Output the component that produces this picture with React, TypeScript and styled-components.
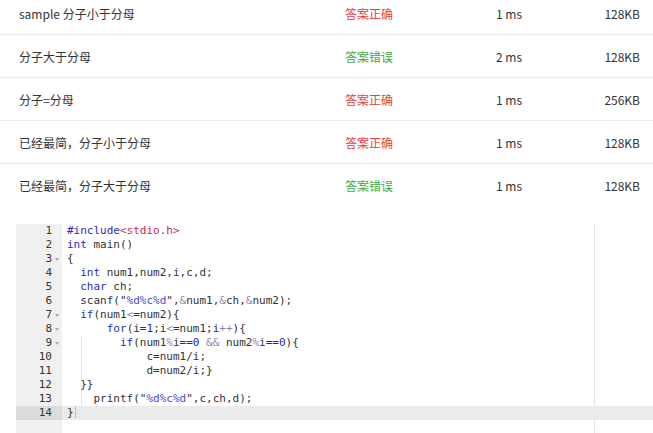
import { FC } from "react";
import styled, { createGlobalStyle } from "styled-components";

type Result = {
  name: string;
  ok: boolean;
  time: string;
  memory: string;
};

type Token = [string, string?];

const results: Result[] = [
  { name: "sample 分子小于分母", ok: true, time: "1 ms", memory: "128KB" },
  { name: "分子大于分母", ok: false, time: "2 ms", memory: "128KB" },
  { name: "分子=分母", ok: true, time: "1 ms", memory: "256KB" },
  { name: "已经最简，分子小于分母", ok: true, time: "1 ms", memory: "128KB" },
  { name: "已经最简，分子大于分母", ok: false, time: "1 ms", memory: "128KB" },
];

// k = keyword, s = string, i = include file, o = operator, n = number
const code: { tokens: Token[]; fold?: boolean; guide?: boolean }[] = [
  { tokens: [["#include", "k"], ["<stdio.h>", "i"]] },
  { tokens: [["int", "k"], [" main()"]] },
  { tokens: [["{"]], fold: true },
  { tokens: [["  "], ["int", "k"], [" num1,num2,i,c,d;"]] },
  { tokens: [["  "], ["char", "k"], [" ch;"]] },
  {
    tokens: [
      ["  scanf(\""],
      ["%d%c%d", "s"],
      ["\",", ""],
      ["&", "o"],
      ["num1,"],
      ["&", "o"],
      ["ch,"],
      ["&", "o"],
      ["num2);"],
    ],
  },
  { tokens: [["  "], ["if", "k"], ["(num1"], ["<", "o"], ["=num2){"]], fold: true },
  {
    tokens: [
      ["      "],
      ["for", "k"],
      ["(i="],
      ["1", "n"],
      [";i"],
      ["<", "o"],
      ["=num1;i"],
      ["++", "o"],
      ["){"],
    ],
    fold: true,
  },
  {
    tokens: [
      ["        "],
      ["if", "k"],
      ["(num1"],
      ["%", "o"],
      ["i=="],
      ["0", "n"],
      [" "],
      ["&&", "o"],
      [" num2"],
      ["%", "o"],
      ["i=="],
      ["0", "n"],
      ["){"],
    ],
    fold: true,
    guide: true,
  },
  { tokens: [["            c=num1/i;"]], guide: true },
  { tokens: [["            d=num2/i;}"]], guide: true },
  { tokens: [["  }}"]], guide: true },
  { tokens: [["    printf(\""], ["%d%c%d", "s"], ["\",c,ch,d);"]], guide: true },
  { tokens: [["}"]] },
];

const GlobalStyle = createGlobalStyle`
  html, body {
    margin: 0;
    padding: 0;
    background: #fff;
    overflow: hidden;
  }
`;

const ResultRow: FC<{ result: Result; last: boolean }> = ({ result, last }) => (
  <Row $last={last}>
    <Cell>{result.name}</Cell>
    <Status $ok={result.ok}>{result.ok ? "答案正确" : "答案错误"}</Status>
    <Cell>{result.time}</Cell>
    <Memory>{result.memory}</Memory>
  </Row>
);

export default function App() {
  const activeLine = code.length;

  return (
    <Page>
      <GlobalStyle />
      <ResultList>
        {results.map((r, i) => (
          <ResultRow key={i} result={r} last={i === results.length - 1} />
        ))}
      </ResultList>

      <Editor>
        <Gutter>
          {code.map((line, i) => (
            <GutterCell key={i} $active={i + 1 === activeLine}>
              {i + 1}
              <Fold>{line.fold && <Arrow />}</Fold>
            </GutterCell>
          ))}
        </Gutter>
        <Content>
          <PrintMargin />
          {code.map((line, i) => (
            <CodeLine key={i} $active={i + 1 === activeLine} $guide={!!line.guide}>
              {line.tokens.map(([text, kind], j) => (
                <Tok key={j} $kind={kind ?? ""}>
                  {text}
                </Tok>
              ))}
              {i + 1 === activeLine && <Cursor />}
            </CodeLine>
          ))}
        </Content>
      </Editor>
    </Page>
  );
}

const Page = styled.div`
  width: 653px;
  height: 433px;
  overflow: hidden;
  font-family: "Noto Sans CJK SC", "Noto Sans", sans-serif;
  font-size: 12px;
  color: #333;
`;

const ResultList = styled.div`
  margin-top: -8px;
`;

const Row = styled.div<{ $last: boolean }>`
  display: grid;
  grid-template-columns: 326px 151px 1fr 80px;
  align-items: center;
  height: 42px;
  padding: 0 13px 0 19px;
  border-bottom: 1px solid ${(p) => (p.$last ? "transparent" : "#ececec")};
`;

const Cell = styled.div`
  white-space: nowrap;
`;

const Status = styled.div<{ $ok: boolean }>`
  color: ${(p) => (p.$ok ? "#e5413b" : "#45a845")};
`;

const Memory = styled.div`
  text-align: right;
`;

const Editor = styled.div`
  display: flex;
  margin: 17px 0 0 16px;
  height: 240px;
  font-family: "DejaVu Sans Mono", "Liberation Mono", monospace;
  font-size: 11px;
  line-height: 14px;
`;

const Gutter = styled.div`
  width: 46px;
  flex: none;
  background: #f0f0f0;
  color: #333;
`;

const GutterCell = styled.div<{ $active: boolean }>`
  display: flex;
  justify-content: flex-end;
  align-items: center;
  height: 14px;
  padding-right: 1px;
  background: ${(p) => (p.$active ? "#dcdcdc" : "transparent")};
`;

const Fold = styled.span`
  display: inline-flex;
  justify-content: center;
  align-items: center;
  width: 9px;
`;

const Arrow = styled.span`
  width: 0;
  height: 0;
  border-left: 2.5px solid transparent;
  border-right: 2.5px solid transparent;
  border-top: 3px solid #aaa;
  margin-left: 1px;
`;

const Content = styled.div`
  position: relative;
  flex: 1;
  color: #333;
  white-space: pre;
`;

const PrintMargin = styled.div`
  position: absolute;
  top: 0;
  bottom: 0;
  left: 532px;
  width: 1px;
  background: #e4e4e4;
`;

const CodeLine = styled.div<{ $active: boolean; $guide: boolean }>`
  position: relative;
  height: 14px;
  padding-left: 5px;
  background-color: ${(p) => (p.$active ? "#ebebeb" : "transparent")};
  background-image: ${(p) =>
    p.$guide ? "linear-gradient(#e6e6e6, #e6e6e6)" : "none"};
  background-size: 1px 100%;
  background-repeat: no-repeat;
  background-position: 19px 0;
`;

const tokenColors: Record<string, string> = {
  k: "#2b2bc2",
  s: "#4a4ad6",
  i: "#c3294f",
  o: "#8a8aa8",
  n: "#2323d0",
  "": "#333",
};

const Tok = styled.span<{ $kind: string }>`
  color: ${(p) => tokenColors[p.$kind]};
`;

const Cursor = styled.span`
  display: inline-block;
  width: 1px;
  height: 12px;
  margin-left: 1px;
  vertical-align: -2px;
  background: #bbb;
`;
